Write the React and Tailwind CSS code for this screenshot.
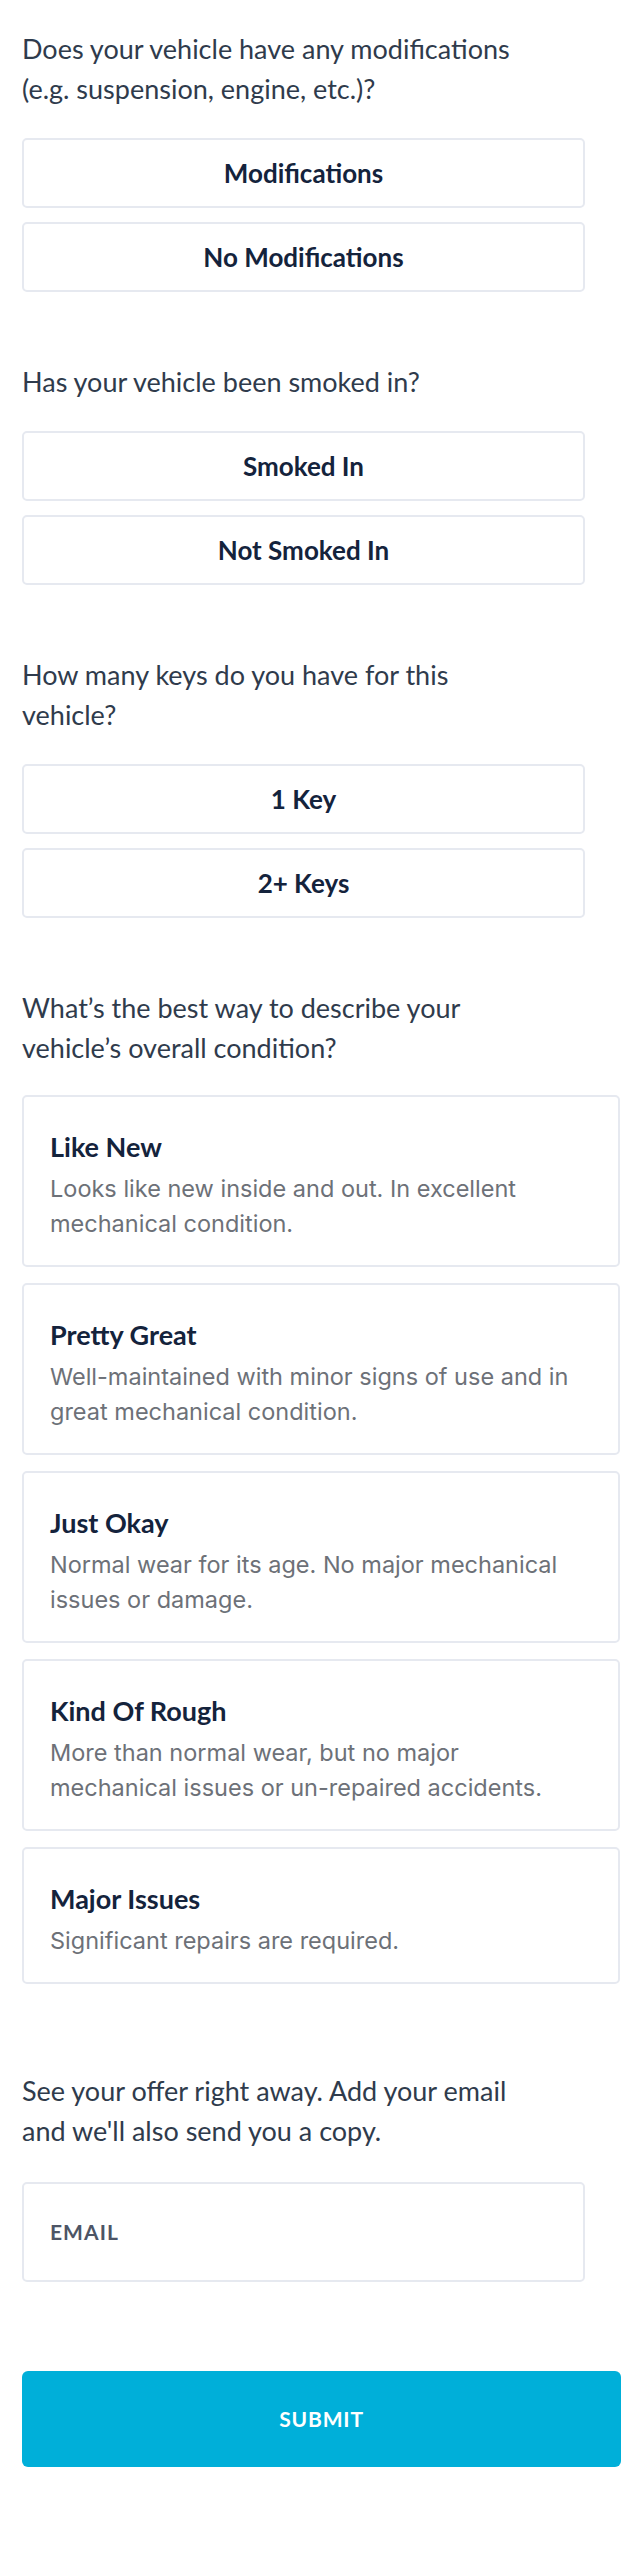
const questions = [
  {
    text: ['Does your vehicle have any modifications', '(e.g. suspension, engine, etc.)?'],
    options: ['Modifications', 'No Modifications'],
  },
  {
    text: ['Has your vehicle been smoked in?'],
    options: ['Smoked In', 'Not Smoked In'],
  },
  {
    text: ['How many keys do you have for this', 'vehicle?'],
    options: ['1 Key', '2+ Keys'],
  },
];

const conditions = [
  {
    title: 'Like New',
    lines: ['Looks like new inside and out. In excellent', 'mechanical condition.'],
  },
  {
    title: 'Pretty Great',
    lines: ['Well-maintained with minor signs of use and in', 'great mechanical condition.'],
  },
  {
    title: 'Just Okay',
    lines: ['Normal wear for its age. No major mechanical', 'issues or damage.'],
  },
  {
    title: 'Kind Of Rough',
    lines: ['More than normal wear, but no major', 'mechanical issues or un-repaired accidents.'],
  },
  {
    title: 'Major Issues',
    lines: ['Significant repairs are required.'],
  },
];

function Question({ lines }) {
  return (
    <p className="text-[27px] leading-[40px] text-[#2f3b4c]">
      {lines.map((l) => (
        <span key={l} className="block">{l}</span>
      ))}
    </p>
  );
}

function OptionButton({ label }) {
  return (
    <button
      type="button"
      className="w-[563px] h-[70px] flex items-center justify-center bg-white border-2 border-[#e6e9f0] rounded-[5px] text-[26px] font-bold text-[#14233c]"
    >
      {label}
    </button>
  );
}

function ConditionCard({ title, lines }) {
  return (
    <div className="w-[598px] bg-white border-2 border-[#e6e9f0] rounded-[5px] pl-[26px] pt-[35px] pb-[24px]">
      <div className="text-[27px] leading-[30px] font-bold text-[#14233c]">{title}</div>
      <div
        className="mt-[9px] text-[23.5px] leading-[35px] text-[#6d7178]"
        style={{ fontFamily: 'Inter, "Liberation Sans", sans-serif' }}
      >
        {lines.map((l) => (
          <span key={l} className="block">{l}</span>
        ))}
      </div>
    </div>
  );
}

export default function App() {
  return (
    <div
      className="w-[643px] min-h-[2560px] bg-white px-[22px] pt-[29px]"
      style={{ fontFamily: 'Lato, "Open Sans", sans-serif' }}
    >
      {questions.map((q, i) => (
        <section key={i} className={i === 0 ? '' : 'mt-[70px]'}>
          <Question lines={q.text} />
          <div className="mt-[29px] flex flex-col gap-[14px]">
            {q.options.map((o) => (
              <OptionButton key={o} label={o} />
            ))}
          </div>
        </section>
      ))}

      <section className="mt-[70px]">
        <Question lines={["What’s the best way to describe your", "vehicle’s overall condition?"]} />
        <div className="mt-[27px] flex flex-col gap-[16px]">
          {conditions.map((c) => (
            <ConditionCard key={c.title} {...c} />
          ))}
        </div>
      </section>

      <section className="mt-[87px]">
        <Question lines={['See your offer right away. Add your email', "and we'll also send you a copy."]} />
        <div className="mt-[31px] w-[563px] h-[100px] flex items-center border-2 border-[#e6e9f0] rounded-[5px] pl-[26px]">
          <span className="text-[21px] font-bold tracking-[0.05em] text-[#4d5566]">EMAIL</span>
        </div>
      </section>

      <button
        type="button"
        className="mt-[89px] w-[599px] h-[96px] flex items-center justify-center rounded-[6px] bg-[#00afd9] text-white text-[21px] font-bold tracking-[0.04em]"
      >
        SUBMIT
      </button>
    </div>
  );
}
